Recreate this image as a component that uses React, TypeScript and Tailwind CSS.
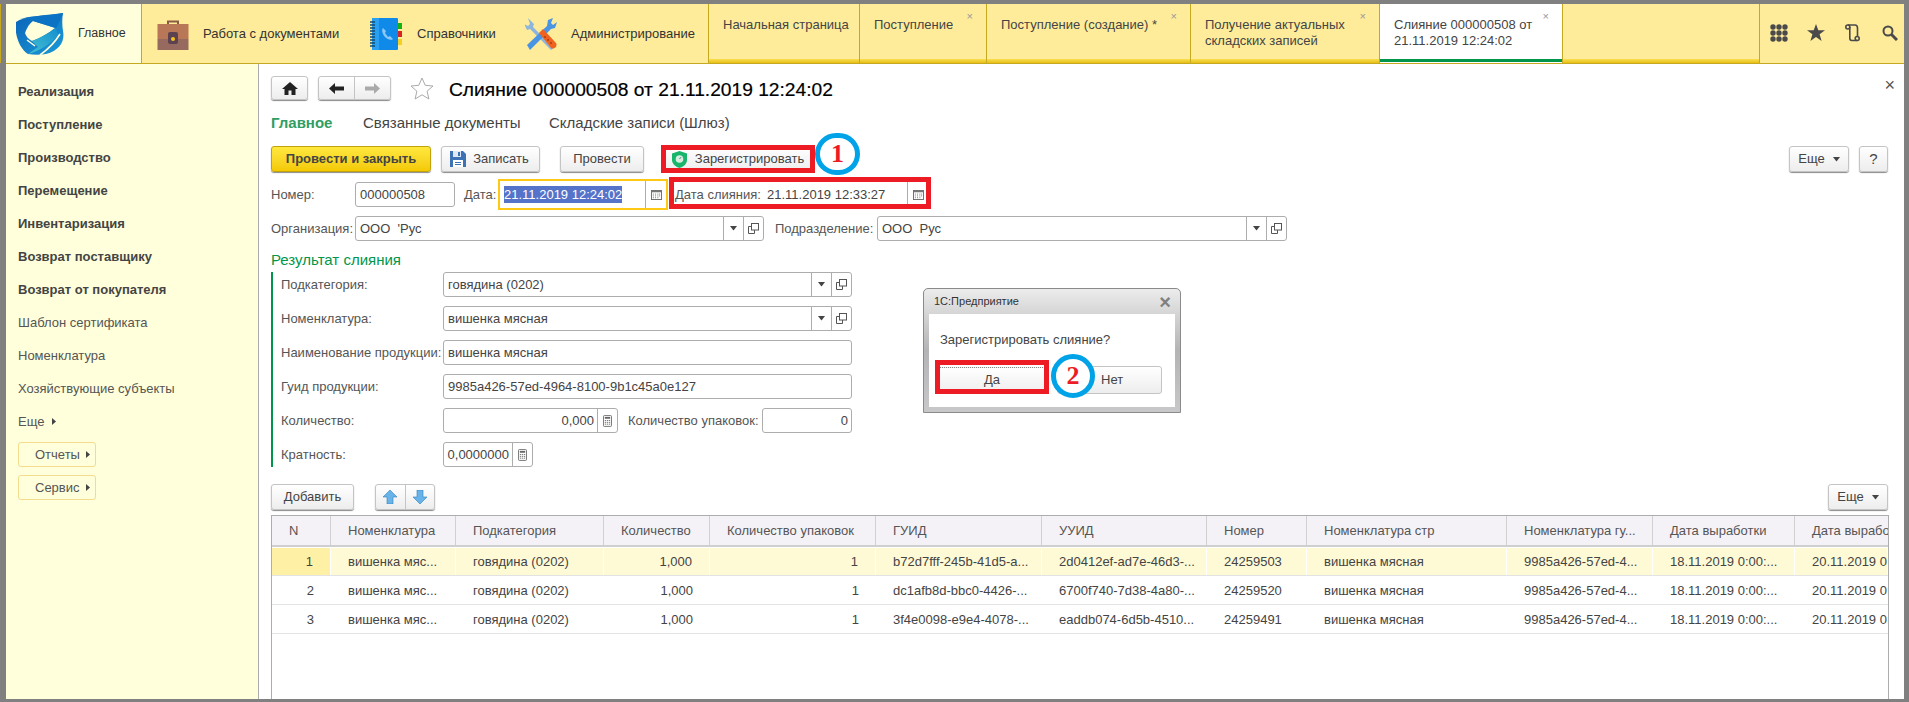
import React from "react";

const Caret = ({ c = "#444" }: { c?: string }) => (
  <svg width="7" height="5" viewBox="0 0 7 5"><path d="M0 0h7L3.5 4.5z" fill={c} /></svg>
);
const CaretR = () => (
  <svg width="5" height="7" viewBox="0 0 5 7"><path d="M0 0v7l4-3.5z" fill="#444" /></svg>
);
const Calendar = () => (
  <svg width="11" height="10" viewBox="0 0 12 11" fill="none">
    <rect x="0.5" y="0.5" width="11" height="10" stroke="#666" fill="#fff" />
    <rect x="0.5" y="0.5" width="11" height="2" fill="#777" />
    <path d="M2 4.5h1M4.5 4.5h1M7 4.5h1M9 4.5h1M2 6.5h1M4.5 6.5h1M7 6.5h1M9 6.5h1M2 8.5h1M4.5 8.5h1M7 8.5h1" stroke="#666" />
  </svg>
);
const Calc = () => (
  <svg width="9" height="12" viewBox="0 0 10 13" fill="none">
    <rect x="0.5" y="0.5" width="9" height="12" rx="1" stroke="#666" />
    <rect x="2" y="2" width="6" height="2" fill="#666" />
    <path d="M2 6h1.5M4.3 6h1.5M6.6 6h1.4M2 8h1.5M4.3 8h1.5M6.6 8h1.4M2 10h1.5M4.3 10h1.5M6.6 10h1.4" stroke="#666" />
  </svg>
);
const OpenIcon = () => (
  <svg width="11" height="11" viewBox="0 0 11 11" fill="none" stroke="#555">
    <rect x="3.5" y="0.5" width="7" height="6.5" fill="#fff" />
    <path d="M3.5 3.5H.5v7h6V7" />
  </svg>
);
const Logo = () => (
  <svg width="48" height="42" viewBox="0 0 48 42">
    <defs>
      <linearGradient id="lg1" x1="0" y1="1" x2="1" y2="0">
        <stop offset="0" stopColor="#45c0cf" />
        <stop offset="1" stopColor="#1590d0" />
      </linearGradient>
      <linearGradient id="lg2" x1="0" y1="0" x2="1" y2="1">
        <stop offset="0" stopColor="#0a63b8" />
        <stop offset="1" stopColor="#1b9bd8" />
      </linearGradient>
    </defs>
    <path d="M0 9C8 3 26 3 47 0C46 6 46 12 47 18C49 28 44 37 30 41C24 42 18 42 12 41C4 36-2 22 0 9Z" fill="url(#lg2)" />
    <path d="M9 20C11 14 14 10 17 8L39 15C33 20 24 25 16 28C12 26 10 23 9 20Z" fill="#ffffdb" />
    <path d="M40 15C33 20 24 25 16 28L22 34L12 41C24 38 36 30 42 22Z" fill="url(#lg1)" />
    <path d="M11 27L19 33" stroke="#ffffdb" strokeWidth="1.5" />
    <path d="M44 21C38 31 31 37 24 42" stroke="#ffffdb" strokeWidth="1.6" fill="none" />
    <path d="M47 0C45 6 42 12 40 15L17 8C12 5 8 5 4 6C18 2 32 3 47 0Z" fill="#0c72c4" />
  </svg>
);
const Briefcase = () => (
  <svg width="32" height="32" viewBox="0 0 32 32">
    <path d="M10 6V2.5h12V6h-2V4.5h-8V6z" fill="#8a5a44" />
    <rect x="0.5" y="6" width="31" height="15" fill="#b87757" />
    <rect x="0.5" y="21" width="31" height="11" fill="#966a5e" />
    <rect x="11" y="14" width="10" height="12" rx="2" fill="#5c4150" />
    <circle cx="16" cy="21" r="2" fill="#f8c21c" />
  </svg>
);
const Book = () => (
  <svg width="32" height="32" viewBox="0 0 32 32">
    <rect x="2" y="0" width="26" height="32" rx="1" fill="#0f8ae8" />
    <rect x="2" y="0" width="7" height="32" fill="#2aa0f2" />
    <path d="M0 4h5M0 7h5M0 10h5M0 13h5M0 16h5M0 19h5M0 22h5M0 25h5M0 28h5" stroke="#134a6e" strokeWidth="1.4" />
    <rect x="28" y="5" width="4" height="6" fill="#12b312" />
    <rect x="28" y="13" width="4" height="6" fill="#d62424" />
    <rect x="28" y="21" width="4" height="6" fill="#f5d020" />
    <path d="M13 10c-2 2 0 7 2 9s6 4 8 2l-3-3-2 1-3-4 1-2z" fill="#8cc8f4" />
  </svg>
);
const Tools = () => (
  <svg width="32" height="32" viewBox="0 0 32 32">
    <path d="M3 0l6 6-1 3 21 21-3 2L5 11 2 12-1 6 3 8 5 6z" fill="#8eb6dc" />
    <path d="M28 0l-5 2-1 6-20 19 3 5 21-21 4-1 2-6-4 3-2-2z" fill="#4a94e4" />
    <path d="M14 15l4-4 13 14c2 3-2 7-5 5z" fill="#f0621f" />
    <circle cx="20" cy="19" r="0.9" fill="#a83a0a" />
    <circle cx="23" cy="22" r="0.9" fill="#a83a0a" />
    <circle cx="26" cy="25" r="0.9" fill="#a83a0a" />
  </svg>
);

const SectionItem = ({ icon, label, w, ml, gap }: { icon: React.ReactNode; label: string; w: string; ml: string; gap: string }) => (
  <div className={`flex items-center ${ml}`}>
    {icon}
    <span className={`${gap} ${w} whitespace-nowrap text-[13px] text-[#333]`}>{label}</span>
  </div>
);

const TopTab = ({ w, l1, l2, close, active }: { w: string; l1: string; l2?: string; close?: boolean; active?: boolean }) => (
  <div className={`relative flex flex-col ${w} shrink-0 border-r border-[#c4a921] ${active ? "bg-white" : ""}`}>
    <div className="flex-1 pl-[14px] pt-[13px] text-[13px] leading-[16px] text-[#444] whitespace-nowrap">
      <div>{l1}</div>
      {l2 && <div>{l2}</div>}
    </div>
    <div className={active ? "h-[3px] mb-[1px] bg-[#00954a]" : "h-[4px] bg-gradient-to-b from-[#f9df4e] to-[#e8bd0c]"} />
    {close && <span className="absolute right-[13px] top-[4px] text-[11px] leading-[16px] text-[#999]">×</span>}
  </div>
);

const Btn = ({ w, children, h = "h-[26px]", extra = "" }: { w: string; children: React.ReactNode; h?: string; extra?: string }) => (
  <div className={`${w} ${h} ${extra} shrink-0 flex items-center justify-center rounded-[3px] border border-[#c4c4c4] bg-gradient-to-b from-white to-[#eeeded] shadow-[0_1px_1px_#8a8a8a] text-[13px] text-[#444] whitespace-nowrap`}>
    {children}
  </div>
);

const Field = ({ w, text, right, cells = [] }: { w: string; text: React.ReactNode; right?: boolean; cells?: React.ReactNode[] }) => (
  <div className={`${w} h-[25px] shrink-0 flex rounded-[3px] border border-[#adadad] bg-white overflow-hidden`}>
    <div className={`flex-1 min-w-0 flex items-center text-[13px] text-[#444] whitespace-pre ${right ? "justify-end pr-[3px]" : "pl-[4px]"}`}>{text}</div>
    {cells.map((c, i) => (
      <div key={i} className="w-[20px] shrink-0 flex items-center justify-center border-l border-[#adadad]">{c}</div>
    ))}
  </div>
);

const Lbl = ({ w, children, extra = "" }: { w: string; children: React.ReactNode; extra?: string }) => (
  <div className={`${w} ${extra} shrink-0 text-[13px] text-[#555] whitespace-nowrap`}>{children}</div>
);

const cols = ["N", "Номенклатура", "Подкатегория", "Количество", "Количество упаковок", "ГУИД", "УУИД", "Номер", "Номенклатура стр", "Номенклатура гу...", "Дата выработки", "Дата выработки"];
const rows = [
  ["1", "вишенка мяс...", "говядина (0202)", "1,000", "1", "b72d7fff-245b-41d5-a...", "2d0412ef-ad7e-46d3-...", "24259503", "вишенка мясная", "9985a426-57ed-4...", "18.11.2019 0:00:...", "20.11.2019 0:00:00"],
  ["2", "вишенка мяс...", "говядина (0202)", "1,000", "1", "dc1afb8d-bbc0-4426-...", "6700f740-7d38-4a80-...", "24259520", "вишенка мясная", "9985a426-57ed-4...", "18.11.2019 0:00:...", "20.11.2019 0:00:00"],
  ["3", "вишенка мяс...", "говядина (0202)", "1,000", "1", "3f4e0098-e9e4-4078-...", "eaddb074-6d5b-4510...", "24259491", "вишенка мясная", "9985a426-57ed-4...", "18.11.2019 0:00:...", "20.11.2019 0:00:00"],
];
const gridCols = "grid grid-cols-[59px_125px_148px_106px_166px_166px_165px_100px_200px_146px_142px_93px]";

const navBold = ["Реализация", "Поступление", "Производство", "Перемещение", "Инвентаризация", "Возврат поставщику", "Возврат от покупателя"];
const navReg = ["Шаблон сертификата", "Номенклатура", "Хозяйствующие субъекты"];

export default function App() {
  return (
    <div className="relative w-[1909px] h-[702px] overflow-hidden bg-[#808080] pt-[4px] pl-[6px] pr-[5px] pb-[3px] font-['Liberation_Sans','Arial',sans-serif]">
      <div className="absolute left-0 top-[4px] w-[1px] h-[59px] bg-[#c4a921]" />

      {/* top bar */}
      <div className="flex h-[60px] border-b border-[#c4a921] bg-[#feec9b]">
        <div className="w-[136px] shrink-0 flex items-center bg-[#ffffdb] border-r border-[#c4a921] pl-[10px]">
          <Logo />
          <span className="ml-[14px] text-[12.5px] text-[#333]">Главное</span>
        </div>
        <div className="w-[567px] shrink-0 flex items-center border-r border-[#c4a921]">
          <SectionItem icon={<Briefcase />} label="Работа с документами" ml="ml-[15px]" gap="ml-[14px]" w="w-[136px]" />
          <SectionItem icon={<Book />} label="Справочники" ml="ml-[31px]" gap="ml-[15px]" w="w-[77px]" />
          <SectionItem icon={<Tools />} label="Администрирование" ml="ml-[31px]" gap="ml-[14px]" w="w-[121px]" />
        </div>
        <TopTab w="w-[151px]" l1="Начальная страница" />
        <TopTab w="w-[127px]" l1="Поступление" close />
        <TopTab w="w-[204px]" l1="Поступление (создание) *" close />
        <TopTab w="w-[189px]" l1="Получение актуальных" l2="складских записей" close />
        <TopTab w="w-[183px]" l1="Слияние 000000508 от" l2="21.11.2019 12:24:02" close active />
        <div className="w-[197px] shrink-0 flex flex-col border-r border-[#c4a921]">
          <div className="flex-1" />
          <div className="h-[4px] bg-gradient-to-b from-[#f9df4e] to-[#e8bd0c]" />
        </div>
        <div className="flex-1 flex items-center pl-[10px] pb-[2px]">
          <svg width="18" height="18" viewBox="0 0 18 18" fill="#4a4a4a">
            {[3, 9, 15].map((y) => [3, 9, 15].map((x) => <circle key={`${x}-${y}`} cx={x} cy={y} r="2.7" />))}
          </svg>
          <svg className="ml-[19px]" width="18" height="17" viewBox="0 0 18 17" fill="#4a4a4a">
            <path d="M9 0l2.3 6.2H18l-5.4 4 2 6.8L9 13l-5.6 4 2-6.8L0 6.2h6.7z" />
          </svg>
          <svg className="ml-[20px]" width="15" height="18" viewBox="0 0 15 18" fill="none" stroke="#4a4a4a" strokeWidth="1.6">
            <circle cx="2.8" cy="3" r="2" />
            <path d="M2.800 1H10c2 0 2.500 1 2.500 3v8" />
            <path d="M4.800 3v11c0 1.500.7 2.500 2 2.500h5.400" />
            <circle cx="12.200" cy="14.500" r="2" />
          </svg>
          <svg className="ml-[22px]" width="16" height="16" viewBox="0 0 16 16" fill="none" stroke="#4a4a4a">
            <circle cx="6" cy="6" r="4.500" strokeWidth="2" />
            <path d="M9.500 9.500L15 15" strokeWidth="3" />
          </svg>
        </div>
      </div>

      {/* body */}
      <div className="flex h-[635px]">
        {/* sidebar */}
        <div className="w-[253px] shrink-0 bg-[#ffffdb] border-r border-[#adadad] pl-[12px] pt-[11px]">
          {navBold.map((t) => (
            <div key={t} className="h-[33px] flex items-center text-[13px] font-bold text-[#444]">{t}</div>
          ))}
          {navReg.map((t) => (
            <div key={t} className="h-[33px] flex items-center text-[13px] text-[#555]">{t}</div>
          ))}
          <div className="h-[33px] flex items-center gap-[8px] text-[13px] text-[#555]">Еще <CaretR /></div>
          <div className="mt-[4px] w-[78px] h-[25px] flex items-center pl-[16px] gap-[6px] rounded-[3px] border border-[#f3dc8e] text-[13px] text-[#555]">Отчеты <CaretR /></div>
          <div className="mt-[8px] w-[78px] h-[25px] flex items-center pl-[16px] gap-[6px] rounded-[3px] border border-[#f3dc8e] text-[13px] text-[#555]">Сервис <CaretR /></div>
        </div>

        {/* main */}
        <div className="relative flex-1 min-w-0 flex flex-col bg-white pl-[12px] pr-[16px] pt-[12px]">
          <span className="absolute right-[9px] top-[13px] text-[18px] leading-[16px] text-[#555]">×</span>
          <div className="flex items-center h-[24px]">
            <Btn w="w-[37px]" h="h-[24px]">
              <svg width="16" height="13" viewBox="0 0 16 13" fill="#222"><path d="M8 0L0 7h2.500v6H6.500V8.500h3V13h4V7H16z" /></svg>
            </Btn>
            <div className="ml-[10px] w-[73px] h-[24px] flex rounded-[3px] border border-[#c4c4c4] bg-gradient-to-b from-white to-[#eeeded] shadow-[0_1px_1px_#8a8a8a]">
              <div className="flex-1 flex items-center justify-center border-r border-[#c4c4c4]">
                <svg width="15" height="11" viewBox="0 0 15 11" fill="#222"><path d="M0 5.500L6 0v3.500h9v4H6V11z" /></svg>
              </div>
              <div className="flex-1 flex items-center justify-center">
                <svg width="15" height="11" viewBox="0 0 15 11" fill="#aaa"><path d="M15 5.500L9 0v3.500H0v4h9V11z" /></svg>
              </div>
            </div>
            <svg className="ml-[19px]" width="24" height="23" viewBox="0 0 24 23" fill="none" stroke="#aaa">
              <path d="M12 1l3.200 7.300 7.800.7-5.900 5.200 1.800 7.800L12 17.800 5.100 22l1.800-7.800L1 9l7.800-.7z" />
            </svg>
            <span className="ml-[15px] mt-[4px] text-[19.2px] text-black whitespace-nowrap [-webkit-text-stroke:0.2px_black]">Слияние 000000508 от 21.11.2019 12:24:02</span>
          </div>

          <div className="mt-[13px] h-[20px] flex items-center pt-[1px] text-[15px] text-[#444] whitespace-nowrap">
            <span className="w-[92px] font-bold text-[#2f9e63]">Главное</span>
            <span className="w-[186px]">Связанные документы</span>
            <span>Складские записи (Шлюз)</span>
          </div>

          <div className="mt-[13px] h-[26px] flex items-center">
            <div className="w-[160px] h-[26px] shrink-0 flex items-center justify-center rounded-[3px] border border-[#c2a20a] bg-gradient-to-b from-[#ffe83c] to-[#f4c900] shadow-[0_1px_1px_#8a8a8a] text-[13px] font-bold text-[#444]">Провести и закрыть</div>
            <Btn w="w-[99px]" extra="ml-[10px] gap-[7px] pr-[2px]">
              <svg width="16" height="16" viewBox="0 0 16 16">
                <path d="M0 0h13l3 3v13H0z" fill="#3d72b4" />
                <rect x="3" y="0" width="8" height="6" fill="#dfe9f5" />
                <rect x="8" y="1" width="2" height="4" fill="#3d72b4" />
                <rect x="3" y="9" width="10" height="7" fill="#fff" />
                <rect x="5" y="11" width="6" height="1" fill="#3d72b4" />
                <rect x="5" y="13" width="6" height="1" fill="#3d72b4" />
              </svg>
              Записать
            </Btn>
            <Btn w="w-[84px]" extra="ml-[20px]">Провести</Btn>
            <div className="ml-[17px] w-[154px] h-[26px] shrink-0 flex items-center justify-center gap-[8px] bg-gradient-to-b from-white to-[#eeeded] text-[13px] text-[#444]">
              <svg width="15" height="17" viewBox="0 0 15 17">
                <path d="M7.500 0L15 2.500V9c0 4-4 7-7.500 8C4 16 0 13 0 9V2.500z" fill="#18b66a" />
                <circle cx="7.500" cy="8" r="3.800" fill="#d8ece2" />
                <path d="M7.500 8l1.500-1.800" stroke="#3c8a65" />
              </svg>
              Зарегистрировать
            </div>
            <div className="flex-1" />
            <Btn w="w-[60px]" extra="gap-[8px]">Еще <Caret /></Btn>
            <Btn w="w-[29px]" extra="ml-[10px]"><span className="text-[15px]">?</span></Btn>
          </div>

          <div className="mt-[10px] h-[25px] flex items-center">
            <Lbl w="w-[84px]">Номер:</Lbl>
            <Field w="w-[100px]" text="000000508" />
            <Lbl w="w-[34px]" extra="ml-[9px]">Дата:</Lbl>
            <div className="w-[170px] h-[31px] shrink-0 flex items-center border-2 border-[#ffc813] bg-white">
              <div className="flex-1 pl-[4px] text-[13px] whitespace-nowrap">
                <span className="bg-[#5573c9] text-white py-[1px]">21.11.2019 12:24:02</span>
              </div>
              <div className="w-[21px] h-[27px] flex items-center justify-center border-l border-[#adadad]"><Calendar /></div>
            </div>
            <Lbl w="w-[88px]" extra="ml-[7px]">Дата слияния:</Lbl>
            <div className="w-[165px] h-[25px] shrink-0 flex items-center bg-white">
              <div className="flex-1 pl-[4px] text-[13px] text-[#444] whitespace-nowrap">21.11.2019 12:33:27</div>
              <div className="w-[21px] h-[25px] flex items-center justify-center border-l border-[#adadad]"><Calendar /></div>
            </div>
          </div>

          <div className="mt-[9px] h-[25px] flex items-center">
            <Lbl w="w-[84px]">Организация:</Lbl>
            <Field w="w-[409px]" text="ООО  'Рус" cells={[<Caret />, <OpenIcon />]} />
            <Lbl w="w-[102px]" extra="ml-[11px]">Подразделение:</Lbl>
            <Field w="w-[410px]" text="ООО  Рус" cells={[<Caret />, <OpenIcon />]} />
          </div>

          <div className="mt-[9px] h-[20px] flex items-center text-[15px] text-[#00964b]">Результат слияния</div>

          <div className="mt-[2px] flex flex-col gap-[9px] border-l-2 border-[#00964b] pl-[8px]">
            <div className="flex items-center"><Lbl w="w-[162px]">Подкатегория:</Lbl><Field w="w-[409px]" text="говядина (0202)" cells={[<Caret />, <OpenIcon />]} /></div>
            <div className="flex items-center"><Lbl w="w-[162px]">Номенклатура:</Lbl><Field w="w-[409px]" text="вишенка мясная" cells={[<Caret />, <OpenIcon />]} /></div>
            <div className="flex items-center"><Lbl w="w-[162px]">Наименование продукции:</Lbl><Field w="w-[409px]" text="вишенка мясная" /></div>
            <div className="flex items-center"><Lbl w="w-[162px]">Гуид продукции:</Lbl><Field w="w-[409px]" text="9985a426-57ed-4964-8100-9b1c45a0e127" /></div>
            <div className="flex items-center">
              <Lbl w="w-[162px]">Количество:</Lbl>
              <Field w="w-[175px]" right text="0,000" cells={[<Calc />]} />
              <Lbl w="w-[134px]" extra="ml-[10px]">Количество упаковок:</Lbl>
              <Field w="w-[90px]" right text="0" />
            </div>
            <div className="flex items-center"><Lbl w="w-[162px]">Кратность:</Lbl><Field w="w-[90px]" right text="0,0000000" cells={[<Calc />]} /></div>
          </div>

          <div className="mt-[17px] h-[26px] flex items-center">
            <Btn w="w-[83px]">Добавить</Btn>
            <div className="ml-[21px] w-[60px] h-[26px] flex rounded-[3px] border border-[#c4c4c4] bg-gradient-to-b from-white to-[#eeeded] shadow-[0_1px_1px_#8a8a8a]">
              <div className="flex-1 flex items-center justify-center border-r border-[#c4c4c4]">
                <svg width="14" height="14" viewBox="0 0 14 14"><path d="M7 0l7 7H10v7H4V7H0z" fill="#68b4ea" stroke="#2f7fb8" strokeWidth="0.6" /></svg>
              </div>
              <div className="flex-1 flex items-center justify-center">
                <svg width="14" height="14" viewBox="0 0 14 14"><path d="M7 14L0 7h4V0h6v7h4z" fill="#68b4ea" stroke="#2f7fb8" strokeWidth="0.6" /></svg>
              </div>
            </div>
            <div className="flex-1" />
            <Btn w="w-[60px]" extra="gap-[8px]">Еще <Caret /></Btn>
          </div>

          <div className="mt-[5px] flex-1 min-h-0 w-[1618px] border-t border-x border-[#adadad] overflow-hidden">
            <div className={`${gridCols} h-[31px] bg-[#f5f2f7] border-b-2 border-[#cfcfcf]`}>
              {cols.map((c, i) => (
                <div key={i} className={`flex items-center pl-[17px] pt-[1px] text-[13px] text-[#555] whitespace-nowrap overflow-hidden ${i < cols.length - 1 ? "border-r border-[#d0d0d0]" : ""}`}>{c}</div>
              ))}
            </div>
            {rows.map((r, ri) => (
              <div key={ri} className={`${gridCols} h-[29px] border-b border-[#e3e3e3] ${ri === 0 ? "pt-[1px]" : ""}`}>
                {r.map((v, i) => {
                  const sel = ri === 0;
                  const bg = sel ? (i === 0 ? "bg-[#fef0a4]" : "bg-[#fffad6]") : "";
                  const align = i === 0 || i === 3 || i === 4 ? "justify-end pr-[17px]" : "pl-[17px]";
                  return (
                    <div key={i} className={`flex items-center pt-[1px] ${align} ${bg} ${sel ? "border-r border-white" : ""} text-[13px] text-[#444] whitespace-nowrap overflow-hidden`}>{v}</div>
                  );
                })}
              </div>
            ))}
          </div>
        </div>
      </div>

      {/* annotation: red frames and numbered circles */}
      <div className="absolute left-[661px] top-[145px] w-[154px] h-[28px] border-[5px] border-[#ed1c24]" />
      <div className="absolute left-[669px] top-[177px] w-[262px] h-[32px] border-[5px] border-[#ed1c24]" />
      <div className="absolute left-[815px] top-[133px] w-[45px] h-[42px] rounded-full border-[5px] border-[#00a2e8] flex items-center justify-center font-['Liberation_Serif',serif] font-bold text-[26px] leading-none text-[#ed1c24]">1</div>

      {/* dialog */}
      <div className="absolute left-[923px] top-[288px] w-[258px] h-[125px] rounded-t-[5px] border border-[#8a8a8a] bg-gradient-to-b from-[#ececec] via-[#b4b4b6] to-[#c8c8ca] px-[5px] pb-[5px] flex flex-col">
        <div className="h-[25px] shrink-0 flex items-center justify-between pl-[5px] pr-[4px] text-[11px] text-[#333]">
          1С:Предприятие
          <span className="text-[20px] leading-none font-bold text-[#808080]">×</span>
        </div>
        <div className="flex-1 bg-white pl-[11px] pr-[12px] pt-[16px] flex flex-col">
          <div className="text-[13px] text-[#444] whitespace-nowrap">Зарегистрировать слияние?</div>
          <div className="mt-[16px] flex items-center">
            <div className="w-[106px] h-[26px] flex items-center justify-center border border-dotted border-[#888] bg-gradient-to-b from-white to-[#f0eeee] text-[13px] text-[#444] -ml-[1px]">Да</div>
            <div className="ml-[12px] w-[105px] h-[28px] flex items-center justify-start pl-[43px] rounded-[3px] border border-[#c4c4c4] bg-gradient-to-b from-white to-[#eeeded] text-[13px] text-[#444]">Нет</div>
          </div>
        </div>
      </div>
      <div className="absolute left-[935px] top-[360px] w-[114px] h-[34px] border-[5px] border-[#ed1c24]" />
      <div className="absolute left-[1051px] top-[354px] w-[44px] h-[44px] rounded-full border-[5px] border-[#00a2e8] bg-white flex items-center justify-center font-['Liberation_Serif',serif] font-bold text-[26px] leading-none text-[#ed1c24]">2</div>
    </div>
  );
}
